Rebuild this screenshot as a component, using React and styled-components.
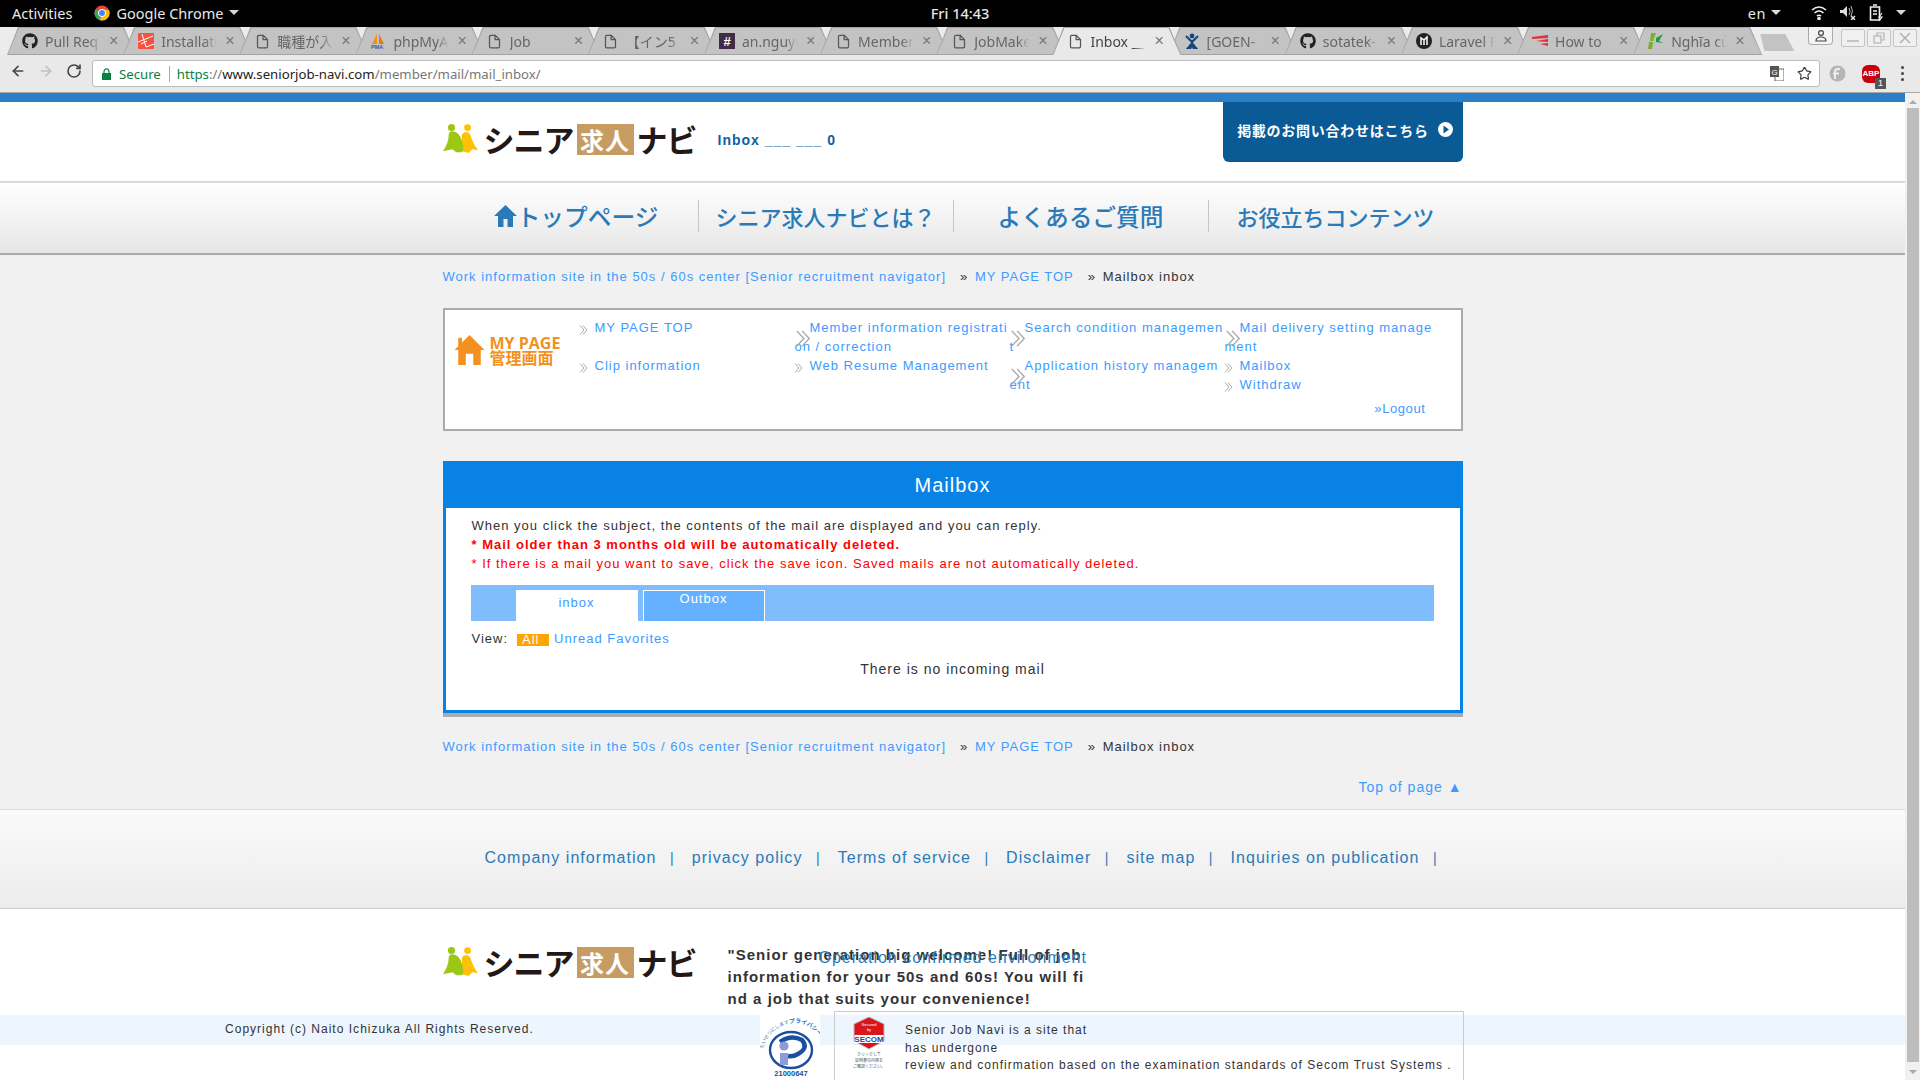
import React from "react";
import styled, { createGlobalStyle } from "styled-components";
import { FaGithub } from "react-icons/fa";
import { FiFile } from "react-icons/fi";
import { ArrowLeft, ArrowRight, RotateCw, Star } from "lucide-react";

const Global = createGlobalStyle`
  html, body { margin: 0; padding: 0; height: 100%; overflow: hidden; background: #fff; }
  * { box-sizing: border-box; }
  #root { height: 100%; }
`;
const UI = `"Noto Sans", "Noto Sans CJK JP", sans-serif`;
const WEB = `"Liberation Sans", "Noto Sans CJK JP", sans-serif`;
const JP = `"Noto Sans CJK JP", "Noto Sans", sans-serif`;

const Screen = styled.div`
  width: 1920px; height: 1080px; display: flex; flex-direction: column; overflow: hidden;
`;
const TopBar = styled.div`
  height: 27px; flex: none; background: #000; color: #e8e8e8; display: grid;
  grid-template-columns: 1fr auto 1fr; align-items: center; padding: 0 12px 2px;
  font: 14.5px ${UI};
`;
const TopLeft = styled.div`display: flex; align-items: center;`;
const TopCenter = styled.div`font-weight: 500;`;
const TopRight = styled.div`display: flex; align-items: center; justify-content: flex-end; padding-right: 2px;`;
const Activities = styled.span`margin-right: 22px;`;
const AppName = styled.span`margin: 0 6px 0 6px;`;
const Caret = styled.span`
  display: inline-block; width: 0; height: 0; border-left: 5px solid transparent;
  border-right: 5px solid transparent; border-top: 5px solid #d8d8d8;
`;
const Lang = styled.span`margin-right: 5px; letter-spacing: .5px;`;
const TrayIcon = styled.svg`display: block; margin-left: ${p => p.$ml || 0}px;`;
const TraySpacer = styled.span`width: 13px;`;

const TabStrip = styled.div`
  height: 28px; flex: none; background: #ececec; display: flex; padding-left: 7px; position: relative;
`;
const TabShape = styled.div`
  width: 129px; height: 28px; margin-right: -12.85px; position: relative; flex: none;
  background: #a3a3a3; clip-path: polygon(0 100%, 11px 0, 117px 0, 129px 100%);
  z-index: ${p => p.$active ? 2 : 1};
  &::before {
    content: ""; position: absolute; inset: 1px 0 ${p => p.$active ? "0" : "1px"} 0;
    background: ${p => p.$active ? "#e9e9e9" : "#c3c3c3"};
    clip-path: polygon(1px 100%, 12px 0, 116px 0, 128px 100%);
  }
`;
const TabInner = styled.div`
  position: relative; display: flex; align-items: center; height: 100%; padding-left: 15px;
  font: 14px ${UI}; color: ${p => p.$active ? "#444" : "#666"};
`;
const TabIcon = styled.span`
  width: 16px; height: 16px; flex: none; display: flex; align-items: center; justify-content: center;
`;
const TabTitle = styled.span`
  width: 56px; margin-left: 7px; white-space: nowrap; overflow: hidden;
  mask-image: linear-gradient(90deg, #000 78%, transparent 100%);
`;
const TabClose = styled.span`
  margin-left: 8px; color: #777; font: 16px ${WEB}; line-height: 16px;
`;
const NewTab = styled.div`
  width: 34px; height: 17px; margin: 7px 0 0 11px; background: #c3c3c3; flex: none;
  clip-path: polygon(4px 100%, 0 0, 25px 0, 34px 100%);
`;
const WinControls = styled.div`
  display: flex; margin-left: auto; align-items: flex-start; padding-right: 3px; gap: 2px;
`;
const ProfileBtn = styled.div`
  width: 25px; height: 18px; margin-right: 6px; border: 1px solid #aaa; border-top: 0; border-radius: 0 0 4px 4px;
  display: flex; align-items: center; justify-content: center; background: #f4f4f4;
`;
const WinBtn = styled.div`
  width: 24px; height: 18px; margin-top: 2px; border: 1px solid #c4c4c4; border-radius: 2px; background: #f0f0f0;
  display: flex; align-items: center; justify-content: center; color: #b4b4b4;
`;

const Toolbar = styled.div`
  height: 38px; flex: none; background: #e9e9e9; border-bottom: 1px solid #a8a8a8;
  display: flex; align-items: flex-start; padding: 5px 0 0 10px;
`;
const NavBtns = styled.div`display: flex; gap: 12px; width: 82px; padding-top: 3px; `;
const Omnibox = styled.div`
  width: 1728px; height: 27px; background: #fff; border: 1px solid #bdbdbd; border-radius: 3px;
  display: flex; align-items: center; padding-left: 9px; font: 13.2px ${UI}; color: #222;
`;
const Secure = styled.span`color: #0b8043; margin-left: 8px;`;
const OmniDivider = styled.span`width: 1px; height: 16px; background: #aaa; margin: 0 7px 0 8px;`;
const UrlScheme = styled.span`color: #0b8043;`;
const UrlPath = styled.span`color: #777;`;
const OmniRight = styled.div`margin-left: auto; display: flex; align-items: center; gap: 13px; padding-right: 7px;`;
const ToolRight = styled.div`display: flex; align-items: center; height: 27px; padding-left: 9px;`;
const Abp = styled.div`
  position: relative; width: 18px; height: 18px; margin-left: 16px;
  background: #c9000b; color: #fff; font: bold 8px ${WEB}; display: flex; align-items: center; justify-content: center;
  border-radius: 6px;
`;
const AbpBadge = styled.span`
  position: absolute; right: -6px; bottom: -6px; width: 11px; height: 11px; background: #555; color: #fff;
  font: 9px ${WEB}; text-align: center; line-height: 11px;
`;
const Dots = styled.div`
  margin-left: 21px; display: flex; flex-direction: column; gap: 3px;
  & span { width: 3px; height: 3px; background: #444; display: block; border-radius: 50%; }
`;

const Viewport = styled.div`flex: 1; min-height: 0; display: flex;`;
const Page = styled.div`
  flex: 1; min-width: 0; background: #f1f1f1; overflow: hidden; color: #333;
  font: 13px/19px ${WEB}; letter-spacing: 1px;
`;
const ScrollTrack = styled.div`
  width: 15px; flex: none; background: #f1f1f1; display: flex; flex-direction: column; align-items: center; padding-top: 7px;
`;
const ScrollUp = styled.div`width: 0; height: 0; border-left: 4px solid transparent; border-right: 4px solid transparent; border-bottom: 4px solid #aaa;`;
const ScrollThumb = styled.div`width: 12px; height: 954px; margin-top: 4px; background: #bdbdbd;`;
const ScrollDown = styled.div`width: 0; height: 0; margin-top: 8px; border-left: 4px solid transparent; border-right: 4px solid transparent; border-top: 4px solid #aaa;`;
const BlueStrip = styled.div`height: 9px; background: #2a7fc5;`;
const Wrap = styled.div`width: 1020px; margin: 0 auto;`;

const HeaderBar = styled.header`background: #fff; height: 81px; border-bottom: 2px solid #d9d9d9;`;
const HeaderInner = styled(Wrap)`display: flex; align-items: flex-start;`;
const LogoRow = styled.div`display: flex; align-items: center; width: 254px; height: 34px; flex: none;`;
const HeaderLogo = styled.div`padding-top: 20px;`;
const LogoKana = styled.span`
  font: 700 ${p => p.$size || 31}px/34px ${JP}; color: #231815; letter-spacing: -1px; white-space: nowrap;
  margin-left: ${p => p.$ml || 0}px;
`;
const LogoBox = styled.span`
  width: 57px; height: 31px; background: #c69c63; color: #fff; font: 700 24px/31px ${JP}; letter-spacing: 1px;
  text-align: center; margin-left: 3px; flex: none;
`;
const InboxNote = styled.div`
  margin: 29px 0 0 21px; color: #0f5f9c; font: bold 14px/19px ${WEB}; letter-spacing: 1px; white-space: nowrap;
`;
const Cta = styled.a`
  margin-left: auto; width: 240px; height: 60px; background: #0a5a96; border-radius: 0 0 6px 6px;
  color: #fff; font: 700 14px/20px ${JP}; letter-spacing: .75px; display: flex; align-items: center;
  justify-content: center; gap: 9px; padding: 0 0 5px 5px;
`;
const MainNav = styled.nav`
  height: 70px; background: linear-gradient(#fff, #e6e6e6); border-bottom: 2px solid #a9abae;
  box-sizing: content-box;
`;
const NavInner = styled(Wrap)`display: grid; grid-template-columns: repeat(4, 255px); padding-top: 17px;`;
const NavItem = styled.a`
  height: 32px; margin-top: ${p => p.$first ? 0 : 0}px; display: flex; align-items: center; justify-content: center;
  color: #2a7ab8; font: 500 ${p => p.$size || 22}px/30px ${JP}; letter-spacing: 0; white-space: nowrap;
  border-left: ${p => p.$first ? "0" : "1px solid #c6c6c6"};
  padding-left: ${p => p.$first ? "12px" : "0"};
`;
const Crumbs = styled(Wrap)`
  white-space: nowrap; margin-top: ${p => p.$mt}px; display: flex; gap: 14px;
`;
const Raquo = styled.span`margin-right: 2px;`;
const Link = styled.a`color: #3d9bff;`;
const MyPageBox = styled(Wrap)`
  margin-top: 22px; height: 123px; background: #fff; border: 2px solid #a9abae; padding-top: 8px;
`;
const MyGrid = styled.div`display: grid; grid-template-columns: 135px repeat(4, 215px);`;
const MyLogo = styled.div`display: flex; align-items: flex-start; padding: 9px 0 0 9px; gap: 5px;`;
const MyLogoText = styled.div`
  color: #f39020; font: 700 16px/15px "Open Sans", ${JP}; letter-spacing: 0; white-space: nowrap; padding-top: 9px;
`;
const MyLogoHouse = styled.svg`margin-top: 8px; flex: none;`;
const MyCol = styled.div`display: flex; flex-direction: column;`;
const MyItem = styled.a`
  position: relative; display: block; color: #3d9bff; text-indent: 15px; word-break: break-all;
  min-height: ${p => p.$short ? 19 : 38}px;
`;
const Chevron = styled.svg`
  position: absolute; left: ${p => p.$big ? 0 : -1}px; top: ${p => p.$big ? 12 : 7}px;
`;
const Logout = styled.div`text-align: right; padding: 5px 35px 0 0; letter-spacing: .6px;`;

const Panel = styled(Wrap)`
  margin-top: 30px; background: #fff; border: 3px solid #0882e4; border-top: 0; box-shadow: 0 4px 0 #a9abae;
`;
const PanelTitle = styled.h2`
  margin: 0 -3px; height: 47px; background: #0882e4; color: #fff; text-align: center;
  font: 20px/49px ${WEB}; letter-spacing: 1px;
`;
const PanelBody = styled.div`padding: 8px 25px 31px;`;
const Notice = styled.div`
  padding-left: 1px; color: ${p => p.$red ? "#f00" : "#333"}; font-weight: ${p => p.$bold ? 700 : 400}; white-space: nowrap;
`;
const MailTabs = styled.div`
  margin-top: 12px; width: 963px; height: 36px; background: #80bdff; display: flex; align-items: flex-end; padding-left: 45px; gap: 5px;
`;
const MailTab = styled.a`
  width: 122px; height: 31px; text-align: center;
  background: ${p => p.$active ? "#fff" : "#66b1ff"};
  color: ${p => p.$active ? "#3d9bff" : "#fff"};
  border: ${p => p.$active ? "0" : "1px solid #fff"}; border-bottom: 0;
  line-height: ${p => p.$active ? "25px" : "15px"};
`;
const ViewRow = styled.div`margin-top: 8px; padding-left: 1px; display: flex; align-items: center; white-space: nowrap;`;
const AllBadge = styled.span`
  width: 32px; height: 12px; margin: 2px 5px 0 9px; background: #ffa500; color: #fff; line-height: 11px; padding-left: 5px; overflow: hidden;
`;
const Empty = styled.div`margin-top: 11px; text-align: center; font-size: 14px; line-height: 20px;`;
const TopLink = styled(Wrap)`margin-top: 22px; text-align: right; font-size: 14px;`;
const FooterNav = styled.div`
  margin-top: 12px; height: 100px; background: linear-gradient(#fafafa, #ececec);
  border-top: 1px solid #ddd; border-bottom: 1px solid #ccc;
`;
const FooterLinks = styled(Wrap)`
  display: flex; padding: 37px 0 0 42px; font-size: 16px; line-height: 22px; letter-spacing: 1.05px; color: #2a7ab8;
  white-space: nowrap;
`;
const Pipe = styled.span`color: #2a7ab8; font-size: 14px; margin: 0 17px 0 13.5px;`;
const FooterWhite = styled.div`background: #fff; height: 171px; overflow: hidden;`;
const FooterMain = styled(Wrap)`display: flex; padding-top: 35px; position: relative; height: 106px;`;
const FooterLogo = styled.div`width: 285px; flex: none; padding-top: 1px;`;
const Slogan = styled.div`
  width: 359px; font: bold 15px/22px ${WEB}; letter-spacing: 1.03px; word-break: break-all; color: #333;
`;
const Operation = styled.a`
  position: absolute; left: 376px; top: 38px; color: #2a7ab8; font-size: 16px; line-height: 22px; letter-spacing: 1px; white-space: nowrap;
`;
const Band = styled.div`
  height: 30px; background: #edf5fe; position: relative; padding-left: 225px; font-size: 12px; line-height: 28px; color: #333; letter-spacing: 1.02px;
`;
const Certs = styled(Wrap)`
  position: absolute; left: 443px; top: 0; height: 65px; pointer-events: none;
`;
const PrivacyMark = styled.svg`
  position: absolute; left: 317px; top: 0; background: #fff; display: block; letter-spacing: 0;
`;
const SecomBox = styled.div`
  position: absolute; left: 391px; top: -4px; width: 630px; height: 75px; border: 1px solid #ccc;
  display: flex; padding: 5px 0 0 17px; gap: 19px; letter-spacing: 0;
`;
const SecomText = styled.div`font-size: 12px; line-height: 17.7px; padding-top: 5px; white-space: nowrap; letter-spacing: 1px;`;

const Github = () => <FaGithub size={16} color="#222" />;
const Doc = () => <FiFile size={15} color="#555" />;
const Laravel = () => (
  <svg width="16" height="16" viewBox="0 0 16 16"><rect width="16" height="16" rx="1" fill="#f4533f" /><path d="M0 9 L15 3 M4 1 L8 14 L16 11 M3 11 L9 8" stroke="#fff" strokeWidth="1" fill="none" /></svg>
);
const Pma = () => (
  <svg width="16" height="16" viewBox="0 0 16 16" letterSpacing="0"><path d="M2 11 L7 1 L7 11 Z" fill="#f29111" /><path d="M14 11 L9 1 L9 11 Z" fill="#e8761a" /><text x="1" y="15.5" fontSize="5.5" fontWeight="700" fill="#3b5a9a" fontFamily="Liberation Sans">PMA</text></svg>
);
const Slack = () => (
  <svg width="16" height="16" viewBox="0 0 16 16"><rect width="16" height="16" fill="#402c44" /><text x="8" y="13" textAnchor="middle" fontSize="13" fontWeight="700" fill="#fff" fontFamily="Liberation Sans">#</text></svg>
);
const Jira = () => (
  <svg width="16" height="16" viewBox="0 0 16 16"><circle cx="8" cy="3" r="2.4" fill="#15457f" /><path d="M2 3 L8 9 L14 3 M8 8 V10 L4 15 H6.5 L8 12 L9.5 15 H12 L8 10" stroke="#15457f" strokeWidth="2" fill="none" /></svg>
);
const LaravelN = () => (
  <svg width="16" height="16" viewBox="0 0 16 16"><circle cx="8" cy="8" r="8" fill="#222" /><path d="M5 12 V5 L8 7 V12 M8 7 L11 4 V12" stroke="#fff" strokeWidth="1.5" fill="none" /></svg>
);
const RedStripes = () => (
  <svg width="16" height="16" viewBox="0 0 16 16"><path d="M0 4 L16 2 L16 5 L0 6 Z M4 8 L16 6 L16 9 Z M8 11 L16 10 L16 13 Z" fill="#e0323c" /></svg>
);
const Bamboo = () => (
  <svg width="16" height="16" viewBox="0 0 16 16"><path d="M3 0 H8 L5 8 H2 Z M1 9 H5 L4 16 H0 Z" fill="#7ab02c" /><path d="M8 5 L15 1 L11 8 L15 10 L8 9 Z" fill="#1d9a4a" /></svg>
);

const tabs = [
  [<Github />, "Pull Req"], [<Laravel />, "Installati"], [<Doc />, "職種が入"], [<Pma />, "phpMyA"],
  [<Doc />, "Job"], [<Doc />, "【イン5"], [<Slack />, "an.nguye"], [<Doc />, "Member"], [<Doc />, "JobMake"],
  [<Doc />, "Inbox __", true], [<Jira />, "[GOEN-"], [<Github />, "sotatek-"], [<LaravelN />, "Laravel F"],
  [<RedStripes />, "How to"], [<Bamboo />, "Nghĩa củ"],
];

const People = ({ size = 37 }) => (
  <svg width={size} height={size * 0.86} viewBox="0 0 37 32">
    <circle cx="26" cy="4" r="3.6" fill="#fdc107" />
    <path d="M20 11 Q26 6 29 12 Q32 22 37 28 L31 27 L27 31 L20 29 Z" fill="#fdc107" />
    <circle cx="9" cy="4" r="3.8" fill="#9cc715" />
    <path d="M9 8 Q17 8 20 18 Q23 27 20 30 L14 30 L10 27 L0 29 Q6 20 6 12 Q6 9 9 8 Z" fill="#9cc715" />
  </svg>
);
const Logo = () => (
  <LogoRow>
    <People />
    <LogoKana $ml={6}>シニア</LogoKana>
    <LogoBox>求人</LogoBox>
    <LogoKana $ml={3}>ナビ</LogoKana>
  </LogoRow>
);
const Chev = ({ big }) => (
  <Chevron $big={big} width={big ? 16 : 9} height={big ? 17 : 10} viewBox="0 0 9 10" preserveAspectRatio="none" fill="none" stroke="#aaa" strokeWidth={big ? 0.8 : 1}>
    <path d="M1 0.5 L5 5 L1 9.5 M4 0.5 L8 5 L4 9.5" />
  </Chevron>
);
const Item = ({ big, short, children }) => (
  <MyItem $short={short}><Chev big={big} />{children}</MyItem>
);
const Crumb = ({ mt }) => (
  <Crumbs $mt={mt}>
    <Link>Work information site in the 50s / 60s center [Senior recruitment navigator]</Link>
    <span><Raquo>»</Raquo> <Link>MY PAGE TOP</Link></span>
    <span><Raquo>»</Raquo> Mailbox inbox</span>
  </Crumbs>
);

export default function App() {
  return (
    <Screen>
      <Global />
      <TopBar>
        <TopLeft>
          <Activities>Activities</Activities>
          <svg width="16" height="16" viewBox="0 0 16 16">
            <circle cx="8" cy="8" r="7.5" fill="#e8453c" />
            <path d="M8 8 L1.5 4.2 A7.5 7.5 0 0 0 6 15.2 Z" fill="#34a853" />
            <path d="M8 8 L6 15.2 A7.5 7.5 0 0 0 15 5 L8 4.5 Z" fill="#fbbc05" />
            <circle cx="8" cy="8" r="3.6" fill="#4285f4" stroke="#fff" strokeWidth="1" />
          </svg>
          <AppName>Google Chrome</AppName>
          <Caret />
        </TopLeft>
        <TopCenter>Fri 14:43</TopCenter>
        <TopRight>
          <Lang>en</Lang><Caret />
          <TrayIcon $ml={30} width="16" height="14" viewBox="0 0 16 14" fill="none" stroke="#eee" strokeWidth="1.6">
            <path d="M1 4 Q8 -2 15 4 M3.5 7 Q8 3 12.5 7 M6 10 Q8 8.5 10 10" /><circle cx="8" cy="12.5" r="1" fill="#eee" />
          </TrayIcon>
          <TrayIcon $ml={13} width="16" height="15" viewBox="0 0 16 15" fill="#ddd">
            <path d="M0 5 H3 L7 1 V12 L3 8 H0 Z" /><path d="M9 3 Q11 6.5 9 10 M11 1 Q14 6.5 11 11" stroke="#bbb" fill="none" /><path d="M11 11 L15 15 M15 11 L11 15" stroke="#eee" strokeWidth="1.4" />
          </TrayIcon>
          <TrayIcon $ml={13} width="14" height="18" viewBox="0 0 14 18" fill="none" stroke="#eee" strokeWidth="1.6">
            <path d="M4 1 H8 M1.5 3 H10.5 V16 H1.5 Z M4 7 H8 M4 10 H8" /><path d="M13 9 L10 13 H13 L10 17" strokeWidth="1.2" />
          </TrayIcon>
          <TraySpacer />
          <Caret />
        </TopRight>
      </TopBar>

      <TabStrip>
        {tabs.map(([icon, title, active]) => (
          <TabShape key={title} $active={active}>
            <TabInner $active={active}>
              <TabIcon>{icon}</TabIcon>
              <TabTitle>{title}</TabTitle>
              <TabClose>×</TabClose>
            </TabInner>
          </TabShape>
        ))}
        <NewTab />
        <WinControls>
          <ProfileBtn>
            <svg width="12" height="13" viewBox="0 0 12 13" fill="none" stroke="#444" strokeWidth="1.2"><circle cx="6" cy="4" r="2.4" /><path d="M1 12 Q1 8 6 8 Q11 8 11 12 Z" /></svg>
          </ProfileBtn>
          <WinBtn><svg width="12" height="12" viewBox="0 0 12 12" fill="none" stroke="currentColor" strokeWidth="1.5"><path d="M0 9 H12" /></svg></WinBtn>
          <WinBtn><svg width="12" height="12" viewBox="0 0 12 12" fill="none" stroke="currentColor" strokeWidth="1.2"><rect x="1" y="4" width="7" height="7" /><path d="M4 4 V1 H11 V8 H8" /></svg></WinBtn>
          <WinBtn><svg width="12" height="12" viewBox="0 0 12 12" fill="none" stroke="currentColor" strokeWidth="1.6"><path d="M1 1 L11 11 M11 1 L1 11" /></svg></WinBtn>
        </WinControls>
      </TabStrip>

      <Toolbar>
        <NavBtns>
          <ArrowLeft size={16} color="#444" strokeWidth={2.4} />
          <ArrowRight size={16} color="#c0c0c0" strokeWidth={2.4} />
          <RotateCw size={16} color="#444" strokeWidth={2.4} />
        </NavBtns>
        <Omnibox>
          <svg width="9" height="12" viewBox="0 0 9 12"><path d="M2 5 V3.4 A2.5 2.5 0 0 1 7 3.4 V5" stroke="#0b8043" strokeWidth="1.2" fill="none" /><rect y="5" width="9" height="7" fill="#0b8043" /></svg>
          <Secure>Secure</Secure>
          <OmniDivider />
          <span><UrlScheme>https</UrlScheme><UrlPath>://</UrlPath>www.seniorjob-navi.com<UrlPath>/member/mail/mail_inbox/</UrlPath></span>
          <OmniRight>
            <svg width="14" height="15" viewBox="0 0 14 15"><rect x="5" y="3" width="9" height="12" fill="#fff" stroke="#666" /><rect width="9" height="11" fill="#555" /><text x="4.5" y="9" textAnchor="middle" fontSize="8" fill="#fff" fontFamily="Liberation Sans">G</text></svg>
            <Star size={15} color="#333" strokeWidth={1.8} />
          </OmniRight>
        </Omnibox>
        <ToolRight>
          <svg width="17" height="17" viewBox="0 0 17 17"><circle cx="8.5" cy="8.5" r="8" fill="#b5b5b5" /><path d="M6 14 V7 Q6 4 9 4 H11 M4 8.5 H10" stroke="#eee" strokeWidth="2" fill="none" /></svg>
          <Abp>ABP<AbpBadge>1</AbpBadge></Abp>
          <Dots><span /><span /><span /></Dots>
        </ToolRight>
      </Toolbar>

      <Viewport>
        <Page>
          <BlueStrip />
          <HeaderBar>
            <HeaderInner>
              <HeaderLogo><Logo /></HeaderLogo>
              <InboxNote>Inbox ___ ___ 0</InboxNote>
              <Cta>
                掲載のお問い合わせはこちら
                <svg width="15" height="15" viewBox="0 0 15 15"><circle cx="7.5" cy="7.5" r="7.5" fill="#fff" /><path d="M5.5 3.5 L11 7.5 L5.5 11.5 Z" fill="#0a5a96" /></svg>
              </Cta>
            </HeaderInner>
          </HeaderBar>
          <MainNav>
            <NavInner>
              <NavItem $first $size={23.7}>
                <svg width="23" height="22" viewBox="0 0 23 22"><path d="M11.5 0 L23 11 H19 V22 H13.5 V14 H9.5 V22 H4 V11 H0 Z" fill="#2a7ab8" /></svg>
                トップページ
              </NavItem>
              <NavItem>シニア求人ナビとは？</NavItem>
              <NavItem $size={23.7}>よくあるご質問</NavItem>
              <NavItem>お役立ちコンテンツ</NavItem>
            </NavInner>
          </MainNav>

          <Crumb mt={12} />

          <MyPageBox>
            <MyGrid>
              <MyLogo>
                <MyLogoHouse width="31" height="30" viewBox="0 0 32 32"><path d="M16 0 L32 16 H28 V32 H20 V20 H12 V32 H4 V16 H0 L4 12 V3 H8 V8 Z" fill="#f39020" /></MyLogoHouse>
                <MyLogoText>MY PAGE<br />管理画面</MyLogoText>
              </MyLogo>
              <MyCol>
                <Item>MY PAGE TOP</Item>
                <Item>Clip information</Item>
              </MyCol>
              <MyCol>
                <Item big>Member information registration / correction</Item>
                <Item>Web Resume Management</Item>
              </MyCol>
              <MyCol>
                <Item big>Search condition management</Item>
                <Item big>Application history management</Item>
              </MyCol>
              <MyCol>
                <Item big>Mail delivery setting management</Item>
                <Item short>Mailbox</Item>
                <Item short>Withdraw</Item>
              </MyCol>
            </MyGrid>
            <Logout><Link>»Logout</Link></Logout>
          </MyPageBox>

          <Panel>
            <PanelTitle>Mailbox</PanelTitle>
            <PanelBody>
              <Notice>When you click the subject, the contents of the mail are displayed and you can reply.</Notice>
              <Notice $red $bold>* Mail older than 3 months old will be automatically deleted.</Notice>
              <Notice $red>* If there is a mail you want to save, click the save icon. Saved mails are not automatically deleted.</Notice>
              <MailTabs>
                <MailTab $active>inbox</MailTab>
                <MailTab>Outbox</MailTab>
              </MailTabs>
              <ViewRow>
                View:
                <AllBadge>All</AllBadge>
                <Link>Unread Favorites</Link>
              </ViewRow>
              <Empty>There is no incoming mail</Empty>
            </PanelBody>
          </Panel>

          <Crumb mt={24} />
          <TopLink><Link>Top of page ▲</Link></TopLink>

          <FooterNav>
            <FooterLinks>
              <span>Company information</span><Pipe>|</Pipe>
              <span>privacy policy</span><Pipe>|</Pipe>
              <span>Terms of service</span><Pipe>|</Pipe>
              <span>Disclaimer</span><Pipe>|</Pipe>
              <span>site map</span><Pipe>|</Pipe>
              <span>Inquiries on publication</span><Pipe>|</Pipe>
            </FooterLinks>
          </FooterNav>

          <FooterWhite>
            <FooterMain>
              <FooterLogo><Logo /></FooterLogo>
              <Slogan>"Senior generation big welcome! Full of job information for your 50s and 60s! You will find a job that suits your convenience!</Slogan>
              <Operation>Operation confirmed environment</Operation>
            </FooterMain>
            <Band>
              Copyright (c) Naito Ichizuka All Rights Reserved.
              <Certs>
                <PrivacyMark width="60" height="63" viewBox="0 0 60 63">
                  <defs><path id="arc" d="M3 34 C7 18 20 9 33 8 C43 7 53 12 60 22" /></defs>
                  <text fill="#1d6fc0" fontFamily="Noto Sans CJK JP"><textPath href="#arc"><tspan fontSize="4.8">たいせつにします</tspan><tspan fontSize="5.8" fontWeight="700">プライバシー</tspan></textPath></text>
                  <ellipse cx="31" cy="35" rx="21" ry="18" fill="#fff" stroke="#1a4fa0" strokeWidth="2.4" />
                  <path d="M20 27 Q31 19 42 25 Q49 33 38 39 Q33 42 28 41" fill="none" stroke="#1a4fa0" strokeWidth="4.5" />
                  <circle cx="24" cy="31" r="4.6" fill="#8d9bd6" />
                  <path d="M20 38 H28 V50 H20 Z" fill="#8d9bd6" />
                  <text x="31" y="61" textAnchor="middle" fontSize="7.5" fontWeight="700" fill="#1a4fa0" fontFamily="Liberation Sans">21000647</text>
                </PrivacyMark>
                <SecomBox>
                  <svg width="34" height="52" viewBox="0 0 34 52">
                    <path d="M17 0 L32 7 V24 L17 32 L2 24 V7 Z" fill="#d9161b" stroke="#bbb" />
                    <rect x="2.5" y="18" width="29" height="8" fill="#fff" />
                    <text x="17" y="25" textAnchor="middle" fontSize="8" fontWeight="700" fill="#1b4a9a" fontFamily="Liberation Sans">SECOM</text>
                    <text x="17" y="9" textAnchor="middle" fontSize="4" fill="#fff" fontFamily="Liberation Sans">Secured</text>
                    <text x="17" y="14" textAnchor="middle" fontSize="4" fill="#fff" fontFamily="Liberation Sans">by</text>
                    <text x="17" y="39" textAnchor="middle" fontSize="4" fill="#555" fontFamily="Noto Sans CJK JP">クリックして</text>
                    <text x="17" y="45" textAnchor="middle" fontSize="4" fill="#555" fontFamily="Noto Sans CJK JP">証明書の内容を</text>
                    <text x="17" y="51" textAnchor="middle" fontSize="4" fill="#555" fontFamily="Noto Sans CJK JP">ご確認ください。</text>
                  </svg>
                  <SecomText>
                    Senior Job Navi is a site that<br />has undergone<br />review and confirmation based on the examination standards of Secom Trust Systems .
                  </SecomText>
                </SecomBox>
              </Certs>
            </Band>
          </FooterWhite>
        </Page>
        <ScrollTrack>
          <ScrollUp />
          <ScrollThumb />
          <ScrollDown />
        </ScrollTrack>
      </Viewport>
    </Screen>
  );
}
